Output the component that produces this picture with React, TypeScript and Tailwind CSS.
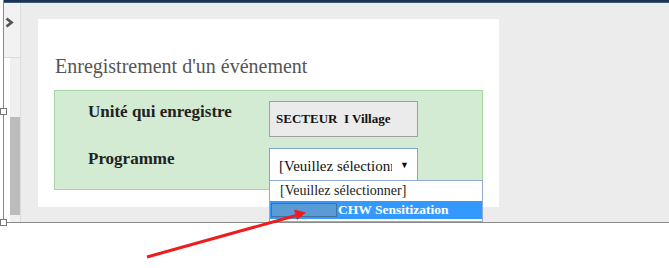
import React from 'react';

const serif = { fontFamily: '"Liberation Serif", "DejaVu Serif", serif' };

export default function App() {
  return (
    <div className="relative w-[669px] h-[268px] bg-white overflow-hidden" style={serif}>
      {/* Embedded screenshot frame */}
      <div className="ml-[3px] w-[666px] h-[223px] border-l border-b border-[#8a8a8a] flex flex-col">
        <div className="h-[3px] bg-[#1e3352] border-b border-[#3b5a80]" />
        <div className="flex flex-1 min-h-0">
          {/* Left sidebar */}
          <div className="w-[17px] flex flex-col border-r border-[#dcdcdc]">
            <div className="h-[55px] bg-[#f2f2f2] border-b border-[#dcdcdc] flex items-start justify-start pt-[14px] pl-[1px]">
              <svg width="9" height="11" viewBox="0 0 9 11">
                <path d="M1.5 1.5 L6.5 5.5 L1.5 9.5" fill="none" stroke="#555" strokeWidth="2.8" />
              </svg>
            </div>
            <div className="flex flex-1">
              <div className="w-[6px] bg-white" />
              <div className="flex-1 flex flex-col bg-[#efefef]">
                <div className="h-[59px]" />
                <div className="h-[98px] bg-[#bcbcbc]" />
              </div>
            </div>
          </div>

          {/* Main area */}
          <div className="flex-1 bg-[#ececec] pl-[17px] pt-[16px]">
            <div className="w-[461px] h-[188px] bg-white pl-[16px] pt-[35px]">
              <h1 className="text-[20px] leading-[24px] text-[#555] pl-[1px]">
                Enregistrement d'un événement
              </h1>
              <div className="mt-[12px] w-[429px] h-[100px] bg-[#d3ebd3] border border-[#a6d6a1] pl-[33px] pt-[10px] grid grid-cols-[181px_149px] gap-y-[6px]">
                <div className="text-[17px] font-bold text-[#222] leading-[20px] pt-[1px]">Unité qui enregistre</div>
                <div className="h-[36px] bg-[#ebebeb] border border-[#a0a0a0] flex items-center pl-[6px] text-[13px] font-bold text-[#111] whitespace-pre">
                  SECTEUR  I Village
                </div>
                <div className="text-[17px] font-bold text-[#222] leading-[20px] pt-[1px]">Programme</div>
                <div className="h-[36px] bg-white border border-[#7ea6d6] flex items-center pl-[9px] pr-[8px]">
                  <span className="w-[113px] overflow-hidden whitespace-nowrap text-[15px] text-[#111]">[Veuillez sélectionner]</span>
                  <span className="ml-auto text-[9px] text-[#111]">▼</span>
                </div>
              </div>
            </div>
          </div>
        </div>
      </div>

      {/* Open dropdown list */}
      <div className="absolute left-[269px] top-[180px] w-[214px] h-[42px] bg-white border border-[#8faad6]">
        <div className="h-[20px] pl-[10px] text-[14px] leading-[20px] text-[#222]">[Veuillez sélectionner]</div>
        <div className="h-[18px] bg-[#3399ff] pl-[68px] text-[13.5px] leading-[18px] font-bold text-white">CHW Sensitization</div>
      </div>

      {/* Blur annotation */}
      <div className="absolute left-[271px] top-[203px] w-[66px] h-[14px] bg-[#5b9bd5] border border-[#41719c]" />

      {/* Red arrow */}
      <svg className="absolute left-0 top-0" width="669" height="268" viewBox="0 0 669 268">
        <line x1="147" y1="257" x2="296" y2="215.5" stroke="#ee1c1c" strokeWidth="3" />
        <polygon points="306,212.5 294,209.5 297,220" fill="#ee1c1c" />
      </svg>

      {/* Selection handles */}
      <div className="absolute left-0 top-[108px] w-[7px] h-[7px] bg-white border border-[#777]" />
      <div className="absolute left-0 top-[219px] w-[7px] h-[7px] bg-white border border-[#777]" />
    </div>
  );
}
